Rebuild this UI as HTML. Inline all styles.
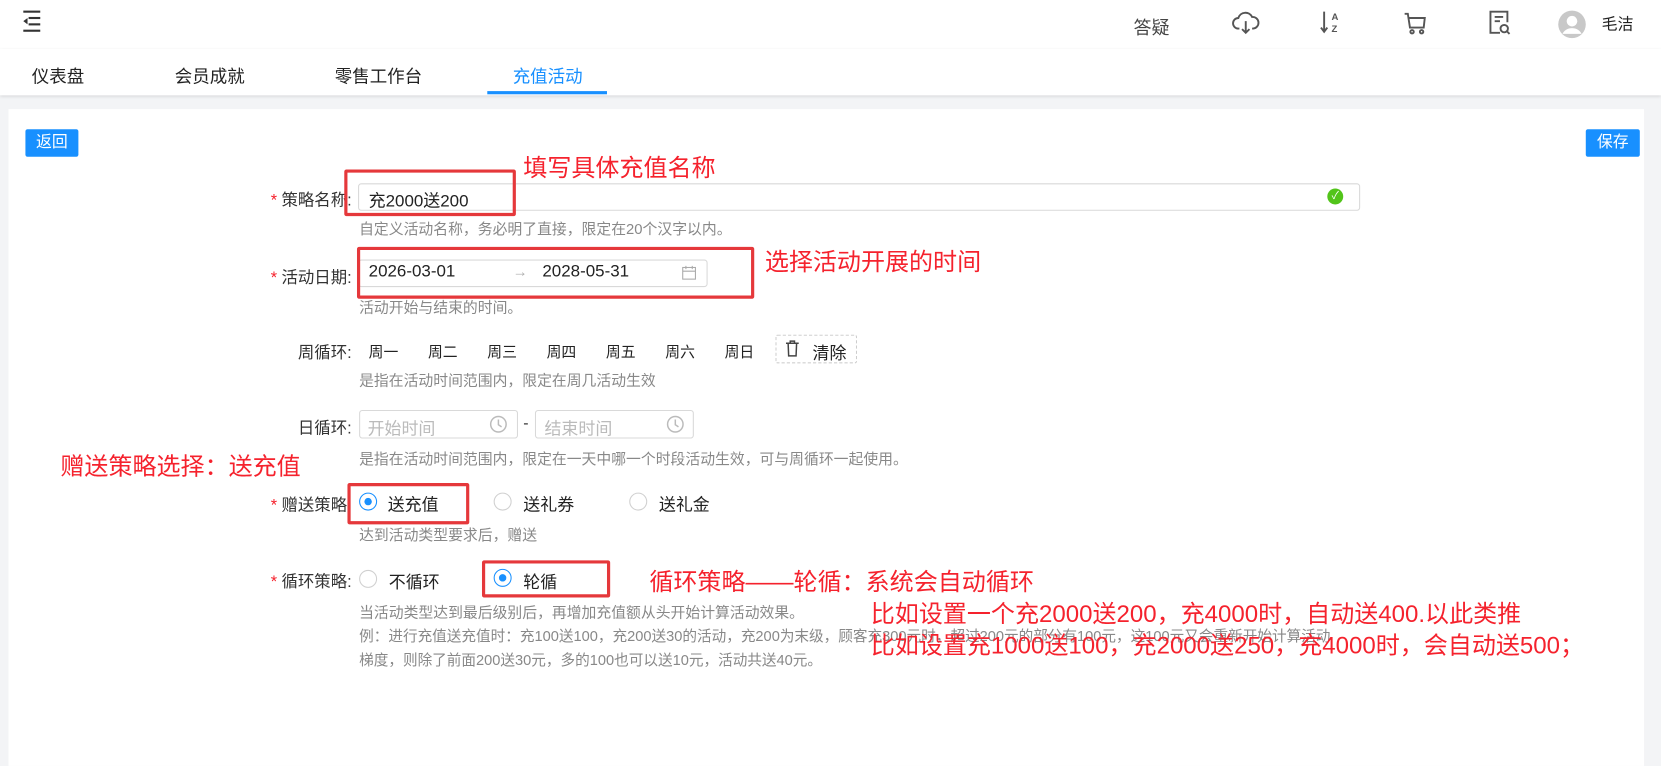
<!DOCTYPE html><html><head><meta charset="utf-8"><style>
*{margin:0;padding:0;box-sizing:border-box}
body{width:1661px;height:756px;background:#f3f4f6;font-family:"Liberation Sans","Noto Sans CJK SC",sans-serif;overflow:hidden;color:#333}
#w{position:absolute;left:0;top:0;width:1568px;height:714px;transform:scale(1.05931);transform-origin:0 0}
.a{position:absolute;white-space:nowrap}
.hdr{position:absolute;left:0;top:0;width:1568px;height:46px;background:#fff}
.tabs{position:absolute;left:0;top:46px;width:1568px;height:44px;background:#fff;box-shadow:0 1px 3px rgba(0,0,0,.12)}
.card{position:absolute;left:8px;top:103px;width:1544px;height:620px;background:#fff}
.btn{position:absolute;background:#1890ff;color:#fff;font-size:15px;border-radius:2px;text-align:center;line-height:26px;height:26px}
.lbl{position:absolute;left:180px;width:152px;text-align:right;font-size:15.5px;color:#333;white-space:nowrap}
.star{color:#f5222d;margin-right:4px}
.help{font-size:14px;color:#888}
.inp{position:absolute;border:1px solid #d9d9d9;border-radius:3px;background:#fff}
.rb{position:absolute;border:1px solid #d0d0d0;border-radius:50%;width:17px;height:17px;background:#fff}
.rb.on{border-color:#1890ff}
.rb.on:after{content:"";position:absolute;left:4px;top:4px;width:7px;height:7px;border-radius:50%;background:#1890ff}
.red{position:absolute;border:3px solid #e5383b;border-radius:2px}
.ann{position:absolute;color:#f5222d;font-size:22.7px;white-space:nowrap}
.d{position:absolute;font-size:14px;color:#222;top:322px}
.rt{position:absolute;font-size:16px;color:#222;white-space:nowrap}
</style></head><body><div id="w">
<div class="hdr"></div>
<svg class="a" style="left:21px;top:9px" width="18" height="22" viewBox="0 0 18 22"><g fill="#333"><rect x="1" y="1" width="16" height="2"/><rect x="6" y="7" width="11" height="2"/><rect x="6" y="13" width="11" height="2"/><rect x="1" y="19" width="16" height="2"/><path d="M1 11 L5 8 L5 14Z"/></g></svg>
<div class="a" style="left:1070px;top:12px;font-size:17px;color:#444">答疑</div>
<svg class="a" style="left:1163px;top:10px" width="26" height="24" viewBox="0 0 26 24" fill="none" stroke="#555" stroke-width="1.8"><path d="M7 17 H6 A5 5 0 0 1 6 7 A7 7 0 0 1 19 6 A5 5 0 0 1 20 17 H19"/><path d="M13 10 V21 M9.5 17.5 L13 21 L16.5 17.5"/></svg>
<svg class="a" style="left:1244px;top:9px" width="24" height="24" viewBox="0 0 24 24"><path d="M6 2 V20 M3 17 L6 21 L9 17" stroke="#555" stroke-width="1.8" fill="none"/><text x="13" y="10" font-size="9" font-weight="bold" fill="#555" font-family="Liberation Sans">A</text><text x="13" y="21" font-size="9" font-weight="bold" fill="#555" font-family="Liberation Sans">Z</text></svg>
<svg class="a" style="left:1324px;top:10px" width="24" height="24" viewBox="0 0 24 24" fill="none" stroke="#555" stroke-width="1.8"><path d="M2 3 H5 L7 16 H20 L21 7 H6"/><circle cx="9" cy="20" r="1.6"/><circle cx="18" cy="20" r="1.6"/></svg>
<svg class="a" style="left:1404px;top:9px" width="24" height="26" viewBox="0 0 24 26" fill="none" stroke="#555" stroke-width="1.8"><path d="M12 22 H3 V2 H19 V12"/><path d="M7 7 H15 M7 11 H12"/><circle cx="16" cy="18" r="3.5"/><path d="M18.5 20.5 L21 23"/></svg>
<svg class="a" style="left:1470px;top:9px" width="28" height="28" viewBox="0 0 28 28"><circle cx="14" cy="14" r="13" fill="#c8c8c8"/><circle cx="14" cy="11" r="5" fill="#fff"/><path d="M5 23 A9.5 8 0 0 1 23 23 Z" fill="#fff"/></svg>
<div class="a" style="left:1512px;top:12px;font-size:15px;color:#222">毛洁</div>
<div class="tabs"></div>
<div class="a" style="left:30px;top:59px;font-size:16.5px;color:#222">仪表盘</div>
<div class="a" style="left:165px;top:59px;font-size:16.5px;color:#222">会员成就</div>
<div class="a" style="left:316px;top:59px;font-size:16.5px;color:#222">零售工作台</div>
<div class="a" style="left:484px;top:59px;font-size:16.5px;color:#1890ff">充值活动</div>
<div class="a" style="left:460px;top:86px;width:113px;height:3px;background:#1890ff"></div>
<div class="card"></div>
<div class="btn" style="left:24px;top:122px;width:50px">返回</div>
<div class="btn" style="left:1497px;top:122px;width:51px">保存</div>

<div class="lbl" style="top:177px"><span class="star">*</span>策略名称:</div>
<div class="inp" style="left:338px;top:173px;width:946px;height:26px"></div>
<div class="a" style="left:348px;top:176px;font-size:16px;color:#222">充2000送200</div>
<div class="a" style="left:1253px;top:178px;width:15px;height:15px;border-radius:50%;background:#52c41a;color:#fff;font-size:10px;text-align:center;line-height:15px">✓</div>
<div class="a help" style="left:339px;top:206px">自定义活动名称，务必明了直接，限定在20个汉字以内。</div>

<div class="lbl" style="top:250px"><span class="star">*</span>活动日期:</div>
<div class="inp" style="left:338px;top:245px;width:330px;height:26px"></div>
<div class="a" style="left:348px;top:248px;font-size:16px;color:#222">2026-03-01</div>
<div class="a" style="left:484px;top:248px;font-size:14px;color:#aaa">→</div>
<div class="a" style="left:512px;top:248px;font-size:16px;color:#222">2028-05-31</div>
<svg class="a" style="left:643px;top:250px" width="15" height="15" viewBox="0 0 15 15" fill="none" stroke="#aaa"><rect x="1.5" y="2.5" width="12" height="11"/><path d="M1.5 6 H13.5 M4.5 1 V4 M10.5 1 V4"/></svg>
<div class="a help" style="left:339px;top:280px">活动开始与结束的时间。</div>

<div class="lbl" style="top:321px">周循环:</div>
<div class="d" style="left:348px">周一</div>
<div class="d" style="left:404px">周二</div>
<div class="d" style="left:460px">周三</div>
<div class="d" style="left:516px">周四</div>
<div class="d" style="left:572px">周五</div>
<div class="d" style="left:628px">周六</div>
<div class="d" style="left:684px">周日</div>
<div class="a" style="left:732px;top:316px;width:77px;height:27px;border:1px dashed #ccc;border-radius:2px"></div>
<svg class="a" style="left:741px;top:321px" width="14" height="16" viewBox="0 0 14 16" fill="none" stroke="#444" stroke-width="1.4"><path d="M1 3 H13 M5 3 V1 H9 V3 M3 3 L3.5 15 H10.5 L11 3"/></svg>
<div class="a" style="left:767px;top:320px;font-size:16px;color:#222">清除</div>
<div class="a help" style="left:339px;top:349px">是指在活动时间范围内，限定在周几活动生效</div>

<div class="lbl" style="top:392px">日循环:</div>
<div class="inp" style="left:339px;top:387px;width:150px;height:27px"></div>
<div class="a" style="left:347px;top:391px;font-size:16px;color:#bbb">开始时间</div>
<svg class="a" style="left:462px;top:392px" width="17" height="17" viewBox="0 0 17 17" fill="none" stroke="#bbb" stroke-width="1.4"><circle cx="8.5" cy="8.5" r="7.3"/><path d="M8.5 4 V9 L11.5 11"/></svg>
<div class="a" style="left:494px;top:391px;font-size:15px">-</div>
<div class="inp" style="left:505px;top:387px;width:150px;height:27px"></div>
<div class="a" style="left:514px;top:391px;font-size:16px;color:#bbb">结束时间</div>
<svg class="a" style="left:629px;top:392px" width="17" height="17" viewBox="0 0 17 17" fill="none" stroke="#bbb" stroke-width="1.4"><circle cx="8.5" cy="8.5" r="7.3"/><path d="M8.5 4 V9 L11.5 11"/></svg>
<div class="a help" style="left:339px;top:423px">是指在活动时间范围内，限定在一天中哪一个时段活动生效，可与周循环一起使用。</div>

<div class="lbl" style="top:465px"><span class="star">*</span>赠送策略:</div>
<div class="rb on" style="left:339px;top:465px"></div><div class="rt" style="left:366px;top:463px">送充值</div>
<div class="rb" style="left:466px;top:465px"></div><div class="rt" style="left:494px;top:463px">送礼券</div>
<div class="rb" style="left:594px;top:465px"></div><div class="rt" style="left:622px;top:463px">送礼金</div>
<div class="a help" style="left:339px;top:495px">达到活动类型要求后，赠送</div>

<div class="lbl" style="top:537px"><span class="star">*</span>循环策略:</div>
<div class="rb" style="left:339px;top:538px"></div><div class="rt" style="left:367px;top:536px">不循环</div>
<div class="rb on" style="left:466px;top:537px"></div><div class="rt" style="left:494px;top:536px">轮循</div>
<div class="a help" style="left:339px;top:568px">当活动类型达到最后级别后，再增加充值额从头开始计算活动效果。</div>
<div class="a" style="left:339px;top:589px;font-size:13.8px;color:#888">例：进行充值送充值时：充100送100，充200送30的活动，充200为末级，顾客充300元时，超过200元的部分有100元，这100元又会重新开始计算活动</div>
<div class="a" style="left:339px;top:612px;font-size:13.8px;color:#888">梯度，则除了前面200送30元，多的100也可以送10元，活动共送40元。</div>

<div class="red" style="left:325px;top:160px;width:162px;height:44px"></div>
<div class="red" style="left:337px;top:233px;width:375px;height:49px"></div>
<div class="red" style="left:328px;top:456px;width:115px;height:39px"></div>
<div class="red" style="left:455px;top:529px;width:121px;height:35px"></div>
<div class="ann" style="left:494px;top:140px">填写具体充值名称</div>
<div class="ann" style="left:722px;top:229px">选择活动开展的时间</div>
<div class="ann" style="left:57px;top:422px">赠送策略选择：送充值</div>
<div class="ann" style="left:613px;top:531px">循环策略——轮循：系统会自动循环</div>
<div class="ann" style="left:822px;top:561px">比如设置一个充2000送200，充4000时，自动送400.以此类推</div>
<div class="ann" style="left:822px;top:591px">比如设置充1000送100，充2000送250，充4000时，会自动送500；</div>
</div></body></html>
